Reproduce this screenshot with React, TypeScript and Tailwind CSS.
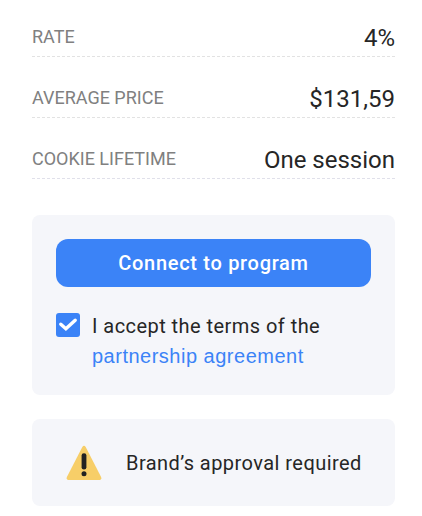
const stats = [
  { label: "RATE", value: "4%", border: "border-[#e2e2e2]" },
  { label: "AVERAGE PRICE", value: "$131,59", border: "border-[#e2e2e2]" },
  { label: "COOKIE LIFETIME", value: "One session", border: "border-[#e0e0ea]" },
];

function WarningIcon() {
  return (
    <svg width="36" height="35" viewBox="0 0 36 35" className="shrink-0">
      <path
        d="M16.3 1.9Q18 -0.2 19.7 1.9L35.1 32Q36 34.7 33.6 34.9H2.4Q0 34.7 0.9 32Z"
        fill="#f7ce68"
      />
      <rect x="15.6" y="8.2" width="4.8" height="16.4" rx="2.3" fill="#222" />
      <circle cx="18" cy="28.7" r="2.5" fill="#222" />
    </svg>
  );
}

function App() {
  return (
    <div className="h-[516px] bg-white pl-8 pr-[27px] font-[Roboto,sans-serif] text-[#262626]">
      {/* Program details */}
      <div className="pt-[18px]">
        {stats.map((item) => (
          <div
            key={item.label}
            className={`mb-[22px] flex h-[39px] items-center justify-between border-b border-dashed pt-0.5 ${item.border}`}
          >
            <span className="pb-0.5 text-lg text-[#808080]">{item.label}</span>
            <span className="text-2xl">{item.value}</span>
          </div>
        ))}
      </div>

      {/* Connect card */}
      <div className="mt-[36px] h-[180px] rounded-lg bg-[#f5f6fa] p-6">
        <button className="flex h-12 w-full items-center justify-center rounded-xl bg-[#3b83f7] text-xl font-medium tracking-[0.7px] text-white">
          Connect to program
        </button>
        <div className="mt-6 flex gap-3">
          <span className="mt-0.5 flex h-6 w-6 shrink-0 items-center justify-center rounded-[3px] bg-[#3b83f7]">
            <svg width="24" height="24" viewBox="0 0 24 24" fill="none">
              <path
                d="M4.8 11.2L9.9 15.7L19.2 7.2"
                stroke="white"
                strokeWidth="3.4"
                strokeLinecap="round"
              />
            </svg>
          </span>
          <p className="text-xl leading-[30px] tracking-[0.45px]">
            <span className="block">I accept the terms of the</span>
            <a href="#" className="block font-['Liberation_Sans',Arial,sans-serif] tracking-[0.5px] text-[#3b83f7]">
              partnership agreement
            </a>
          </p>
        </div>
      </div>

      {/* Approval notice */}
      <div className="mt-6 flex h-[87px] items-center rounded-lg bg-[#f5f6fa] pl-[34px]">
        <WarningIcon />
        <span className="ml-6 text-xl tracking-[0.45px]">Brand’s approval required</span>
      </div>
    </div>
  );
}

export default App;
